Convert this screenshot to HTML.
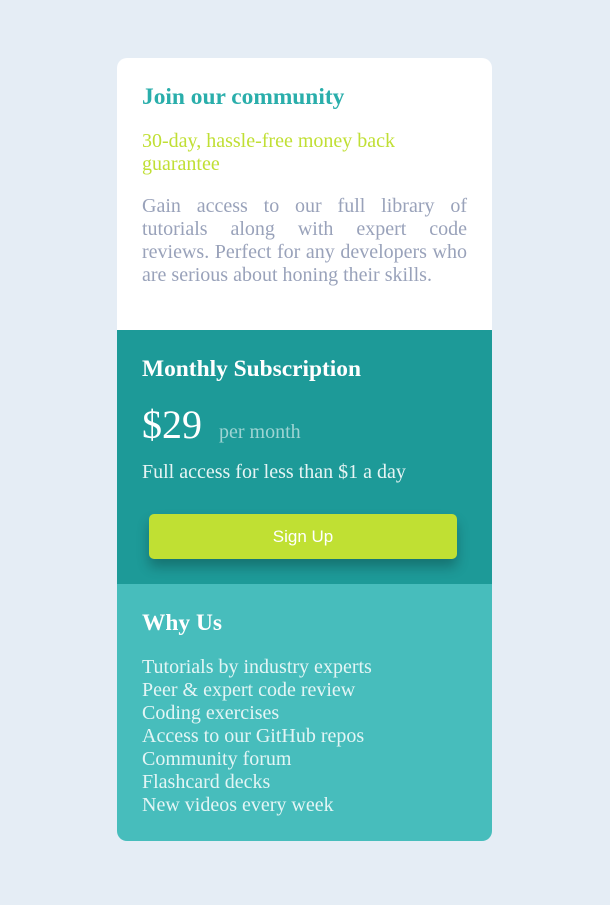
<!DOCTYPE html>
<html><head><meta charset="utf-8"><style>
body{margin:0;background:#e5edf5;font-family:"Liberation Serif",serif;width:610px;height:905px;}
.card{position:absolute;left:117px;top:58px;width:375px;border-radius:10px;overflow:hidden;}
.s1{background:#fff;height:272px;padding:0 25px;box-sizing:border-box;}
.s2{background:#1d9a98;height:254px;padding:0 25px;box-sizing:border-box;position:relative;}
.s3{background:#47bdbc;height:257px;padding:0 25px;box-sizing:border-box;}
h2{margin:0;font-size:23.4px;font-weight:bold;}
p{margin:0}
</style></head><body>
<div class="card">
<div class="s1">
<h2 style="color:#2aaeab;padding-top:27px;line-height:24px">Join our community</h2>
<p style="color:#c0df34;font-size:20px;line-height:23px;margin-top:21px">30-day, hassle-free money back guarantee</p>
<p style="color:#99a2ba;font-size:20px;line-height:23px;margin-top:19px;text-align:justify">Gain access to our full library of tutorials along with expert code reviews. Perfect for any developers who are serious about honing their skills.</p>
</div>
<div class="s2">
<h2 style="color:#fff;padding-top:27px;line-height:24px">Monthly Subscription</h2>
<p style="margin-top:22px;color:#fff;line-height:44px"><span style="font-size:40px">$29</span><span style="font-size:20px;color:#9ed4d3;margin-left:17px">per month</span></p>
<p style="color:#e6f4f4;font-size:20px;line-height:23px;margin-top:5px">Full access for less than $1 a day</p>
<div style="position:absolute;left:32px;top:184px;width:308px;height:45px;background:#c0e033;border-radius:5px;box-shadow:0 8px 12px rgba(0,0,0,0.25);color:#fff;font-family:'Liberation Sans',sans-serif;font-size:17px;line-height:45px;text-align:center">Sign Up</div>
</div>
<div class="s3">
<h2 style="color:#fff;padding-top:27px;line-height:24px">Why Us</h2>
<p style="color:#e3f5f5;font-size:20px;line-height:23px;margin-top:21px">Tutorials by industry experts<br>Peer &amp; expert code review<br>Coding exercises<br>Access to our GitHub repos<br>Community forum<br>Flashcard decks<br>New videos every week</p>
</div>
</div>
</body></html>
